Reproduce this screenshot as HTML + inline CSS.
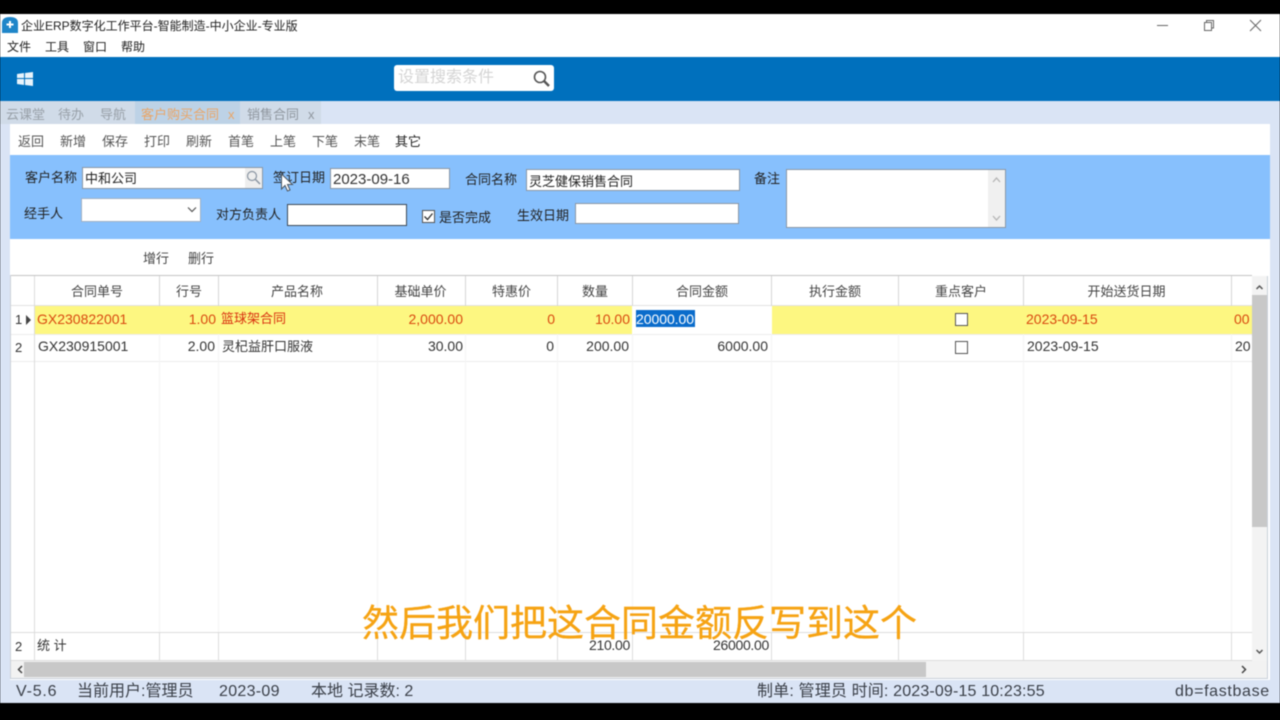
<!DOCTYPE html>
<html lang="zh"><head><meta charset="utf-8"><title>企业ERP</title>
<style>
html,body{margin:0;padding:0;background:#000;}
#p{position:relative;width:1280px;height:720px;overflow:hidden;background:#000;font-family:"Liberation Sans","Noto Sans CJK SC",sans-serif;font-size:13px;color:#333;filter:blur(.4px);}
#p div,#p svg{position:absolute;}
.t{white-space:nowrap;line-height:20px;height:20px;}
.n{font-size:14px;}
.hc{text-align:center;line-height:20px;height:20px;white-space:nowrap;color:#444;top:282px;}
.r{text-align:right;white-space:nowrap;line-height:20px;height:20px;font-size:14px;}
.red{color:#d9480f;}
.in{background:#fff;border:1px solid #8a97a6;box-sizing:border-box;}
.s{font-size:16px;color:#3a3f48;}
.v{width:1px;background:#e0e0e0;}
.vf{width:1px;background:#f4f4f4;}
.h{height:1px;background:#ececec;}
.cb{width:13px;height:13px;border:1px solid #555;background:#fff;box-sizing:border-box;}
</style></head><body><div id="p">
<div style="left:0;top:14px;width:1280px;height:689px;background:#dae4f5"></div>
<div style="left:0;top:14px;width:1280px;height:43px;background:#fff"></div>
<svg style="left:2px;top:17px" width="16" height="16" viewBox="0 0 16 16"><path d="M0 16V6Q0 0 8 0Q16 0 16 6V16Z" fill="#1f86c9"/><path d="M8 4V11M4.5 7.5H11.5" stroke="#fff" stroke-width="2"/></svg>
<div class="t" style="left:21px;top:16px;font-size:12px;color:#222">企业ERP数字化工作平台-智能制造-中小企业-专业版</div>
<div class="t" style="left:7px;top:37px;font-size:12px;color:#222">文件</div>
<div class="t" style="left:45px;top:37px;font-size:12px;color:#222">工具</div>
<div class="t" style="left:83px;top:37px;font-size:12px;color:#222">窗口</div>
<div class="t" style="left:121px;top:37px;font-size:12px;color:#222">帮助</div>
<svg style="left:1150px;top:16px" width="120" height="20" viewBox="0 0 120 20" fill="none" stroke="#666" stroke-width="1"><path d="M7 9.5H18"/><path d="M54.5 6.5H61.5V14.5H54.5ZM56.5 6V4.5H63.5V12H62"/><path d="M100 4L111 15M111 4L100 15"/></svg>
<div style="left:0;top:57px;width:1280px;height:44px;background:#0070bd"></div>
<svg style="left:17px;top:72px" width="16" height="14" viewBox="0 0 16 14" fill="#e8f3fb"><path d="M0 2L7 1V6H0ZM8 1L16 0V6H8ZM0 7H7V13L0 12ZM8 7H16V14L8 13Z"/></svg>
<div style="left:394px;top:65px;width:160px;height:26px;background:#fff;border-radius:3px"></div>
<div class="t" style="left:398px;top:68px;font-size:16px;color:#d4d4d4">设置搜索条件</div>
<svg style="left:531px;top:69px" width="20" height="19" viewBox="0 0 20 19" fill="none" stroke="#555"><circle cx="9" cy="8" r="5.5" stroke-width="1.6"/><path d="M13 12L18 17" stroke-width="2.4"/></svg>

<div style="left:0;top:101px;width:135px;height:23px;background:#d0dbe8"></div>
<div class="t" style="left:6px;top:105px;color:#98a0a8">云课堂</div>
<div class="t" style="left:58px;top:105px;color:#98a0a8">待办</div>
<div class="t" style="left:100px;top:105px;color:#98a0a8">导航</div>
<div style="left:135px;top:101px;width:105px;height:23px;background:#bdd2e6"></div>
<div class="t" style="left:141px;top:105px;color:#eaa566">客户购买合同</div>
<div class="t" style="left:228px;top:105px;color:#eaa566">x</div>
<div style="left:240px;top:101px;width:81px;height:23px;background:#d0dbe8"></div>
<div class="t" style="left:247px;top:105px;color:#8f969e">销售合同</div>
<div class="t" style="left:308px;top:105px;color:#8f969e">x</div>

<div style="left:10px;top:124px;width:1260px;height:31px;background:#fff"></div>
<div class="t" style="left:18px;top:132px;color:#555">返回</div>
<div class="t" style="left:60px;top:132px;color:#555">新增</div>
<div class="t" style="left:102px;top:132px;color:#555">保存</div>
<div class="t" style="left:144px;top:132px;color:#555">打印</div>
<div class="t" style="left:186px;top:132px;color:#555">刷新</div>
<div class="t" style="left:228px;top:132px;color:#555">首笔</div>
<div class="t" style="left:270px;top:132px;color:#555">上笔</div>
<div class="t" style="left:312px;top:132px;color:#555">下笔</div>
<div class="t" style="left:354px;top:132px;color:#555">末笔</div>
<div class="t" style="left:395px;top:132px;color:#222">其它</div>

<div style="left:10px;top:155px;width:1260px;height:84px;background:#87c0fd"></div>
<div class="t" style="left:25px;top:168px;color:#222">客户名称</div>
<div class="in" style="left:82px;top:167px;width:181px;height:22px"></div>
<div style="left:245px;top:168px;width:17px;height:20px;background:#eeeeee"></div>
<svg style="left:245px;top:169px" width="17" height="17" viewBox="0 0 17 17" fill="none" stroke="#8a95a2"><circle cx="7" cy="7" r="4.5" stroke-width="1.2"/><path d="M10.5 10.5L15 15" stroke-width="1.5"/></svg>
<div class="t" style="left:85px;top:169px;color:#222">中和公司</div>
<div class="t" style="left:273px;top:168px;color:#222">签订日期</div>
<div class="in" style="left:330px;top:168px;width:120px;height:21px"></div>
<div class="t" style="left:333px;top:170px;font-size:15px;color:#333">2023-09-16</div>
<div class="t" style="left:465px;top:170px;color:#222">合同名称</div>
<div class="in" style="left:526px;top:169px;width:214px;height:22px"></div>
<div class="t" style="left:529px;top:172px;color:#222">灵芝健保销售合同</div>
<div class="t" style="left:754px;top:169px;color:#222">备注</div>
<div class="in" style="left:786px;top:169px;width:220px;height:59px"></div>
<div style="left:988px;top:170px;width:17px;height:57px;background:#f0f0f0"></div>
<svg style="left:988px;top:170px" width="17" height="57" viewBox="0 0 17 57" fill="none" stroke="#b5b5b5" stroke-width="1.3"><path d="M5 12L8.5 8L12 12M5 46L8.5 50L12 46"/></svg>
<div class="t" style="left:24px;top:204px;color:#222">经手人</div>
<div class="in" style="left:81px;top:198px;width:120px;height:24px;border-color:#9fb0c4"></div>
<svg style="left:186px;top:206px" width="12" height="8" viewBox="0 0 12 8" fill="none" stroke="#555" stroke-width="1.2"><path d="M2 1.5L6 5.5L10 1.5"/></svg>
<div class="t" style="left:216px;top:205px;color:#222">对方负责人</div>
<div class="in" style="left:287px;top:204px;width:120px;height:22px;border-color:#3d4a58"></div>
<div class="cb" style="left:422px;top:210px"></div>
<svg style="left:422px;top:210px" width="13" height="13" viewBox="0 0 13 13" fill="none" stroke="#333" stroke-width="1.3"><path d="M2.5 6.5L5.5 9.5L10.5 3.5"/></svg>
<div class="t" style="left:439px;top:208px;color:#222">是否完成</div>
<div class="t" style="left:517px;top:206px;color:#222">生效日期</div>
<div class="in" style="left:575px;top:203px;width:164px;height:21px"></div>

<div style="left:10px;top:239px;width:1260px;height:441px;background:#fff"></div>
<div class="t" style="left:143px;top:249px;color:#444">增行</div>
<div class="t" style="left:188px;top:249px;color:#444">删行</div>

<div style="left:10px;top:275px;width:1242px;height:1px;background:#c4c4c4"></div>
<div style="left:10px;top:275px;width:1px;height:404px;background:#cdd2d8"></div>
<div style="left:11px;top:305px;width:1241px;height:1px;background:#e2e2e2"></div>

<div style="left:35px;top:306px;width:597px;height:28px;background:#fdf781"></div>
<div style="left:772px;top:306px;width:480px;height:28px;background:#fdf781"></div>

<div class="h" style="left:11px;top:334px;width:1241px"></div>
<div class="h" style="left:11px;top:361px;width:1241px"></div>
<div class="h" style="left:11px;top:632px;width:1241px;background:#dcdcdc"></div>
<div class="h" style="left:11px;top:660px;width:1241px;background:#dcdcdc"></div>

<div class="v" style="left:34px;top:276px;height:385px;background:#dcdcdc"></div>
<div class="v" style="left:159px;top:276px;height:30px;background:#d6d6d6"></div>
<div class="v" style="left:218px;top:276px;height:30px;background:#d6d6d6"></div>
<div class="v" style="left:377px;top:276px;height:30px;background:#d6d6d6"></div>
<div class="v" style="left:465px;top:276px;height:30px;background:#d6d6d6"></div>
<div class="v" style="left:557px;top:276px;height:30px;background:#d6d6d6"></div>
<div class="v" style="left:632px;top:276px;height:30px;background:#d6d6d6"></div>
<div class="v" style="left:771px;top:276px;height:30px;background:#d6d6d6"></div>
<div class="v" style="left:898px;top:276px;height:30px;background:#d6d6d6"></div>
<div class="v" style="left:1023px;top:276px;height:30px;background:#d6d6d6"></div>
<div class="v" style="left:1231px;top:276px;height:30px;background:#d6d6d6"></div>

<div class="vf" style="left:159px;top:334px;height:298px"></div>
<div class="vf" style="left:218px;top:334px;height:298px"></div>
<div class="vf" style="left:377px;top:334px;height:298px"></div>
<div class="vf" style="left:465px;top:334px;height:298px"></div>
<div class="vf" style="left:557px;top:334px;height:298px"></div>
<div class="vf" style="left:632px;top:334px;height:298px"></div>
<div class="vf" style="left:771px;top:334px;height:298px"></div>
<div class="vf" style="left:898px;top:334px;height:298px"></div>
<div class="vf" style="left:1023px;top:334px;height:298px"></div>
<div class="vf" style="left:1231px;top:334px;height:298px"></div>

<div class="v" style="left:159px;top:633px;height:28px;background:#dcdcdc"></div>
<div class="v" style="left:218px;top:633px;height:28px;background:#dcdcdc"></div>
<div class="v" style="left:377px;top:633px;height:28px;background:#dcdcdc"></div>
<div class="v" style="left:465px;top:633px;height:28px;background:#dcdcdc"></div>
<div class="v" style="left:557px;top:633px;height:28px;background:#dcdcdc"></div>
<div class="v" style="left:632px;top:633px;height:28px;background:#dcdcdc"></div>
<div class="v" style="left:771px;top:633px;height:28px;background:#dcdcdc"></div>
<div class="v" style="left:898px;top:633px;height:28px;background:#dcdcdc"></div>
<div class="v" style="left:1023px;top:633px;height:28px;background:#dcdcdc"></div>
<div class="v" style="left:1231px;top:633px;height:28px;background:#dcdcdc"></div>

<div class="hc" style="left:35px;width:124px">合同单号</div>
<div class="hc" style="left:160px;width:58px">行号</div>
<div class="hc" style="left:218px;width:158px">产品名称</div>
<div class="hc" style="left:377px;width:87px">基础单价</div>
<div class="hc" style="left:466px;width:91px">特惠价</div>
<div class="hc" style="left:558px;width:74px">数量</div>
<div class="hc" style="left:633px;width:138px">合同金额</div>
<div class="hc" style="left:772px;width:126px">执行金额</div>
<div class="hc" style="left:899px;width:124px">重点客户</div>
<div class="hc" style="left:1023px;width:207px">开始送货日期</div>

<div class="t" style="left:15px;top:310px;color:#333">1</div>
<svg style="left:25px;top:315px" width="7" height="10" viewBox="0 0 7 10" fill="#444"><path d="M1 0L6 5L1 10Z"/></svg>
<div class="t n red" style="left:37px;top:309px">GX230822001</div>
<div class="r red" style="left:160px;width:56px;top:309px">1.00</div>
<div class="t" style="left:221px;top:309px;color:#d9300f">篮球架合同</div>
<div class="r red" style="left:378px;width:85px;top:309px">2,000.00</div>
<div class="r red" style="left:466px;width:89px;top:309px">0</div>
<div class="r red" style="left:558px;width:72px;top:309px">10.00</div>
<div style="left:636px;top:310px;width:59px;height:17px;background:#0a6ccb"></div>
<div class="t n" style="left:636px;top:309px;color:#fff;letter-spacing:-.05px">20000.00</div>
<div class="cb" style="left:955px;top:313px"></div>
<div class="t n red" style="left:1026px;top:309px">2023-09-15</div>
<div class="t n red" style="left:1234px;top:309px">00</div>

<div class="t" style="left:15px;top:338px;color:#333">2</div>
<div class="t n" style="left:38px;top:336px">GX230915001</div>
<div class="r" style="left:160px;width:55px;top:336px">2.00</div>
<div class="t" style="left:222px;top:337px">灵杞益肝口服液</div>
<div class="r" style="left:378px;width:85px;top:336px">30.00</div>
<div class="r" style="left:466px;width:88px;top:336px">0</div>
<div class="r" style="left:558px;width:71px;top:336px">200.00</div>
<div class="r" style="left:633px;width:135px;top:336px">6000.00</div>
<div class="cb" style="left:955px;top:341px"></div>
<div class="t n" style="left:1027px;top:336px">2023-09-15</div>
<div class="t n" style="left:1235px;top:336px">20</div>

<div class="t" style="left:15px;top:637px;color:#333">2</div>
<div class="t" style="left:37px;top:636px">统 计</div>
<div class="r" style="left:558px;width:72px;top:635px;letter-spacing:-.3px">210.00</div>
<div class="r" style="left:633px;width:136px;top:635px;letter-spacing:-.3px">26000.00</div>

<div style="left:1252px;top:276px;width:15px;height:385px;background:#f3f3f3"></div>
<div style="left:1252px;top:295px;width:15px;height:232px;background:#c8c8c8"></div>
<svg style="left:1252px;top:280px" width="15" height="378" viewBox="0 0 15 378" fill="none" stroke="#555" stroke-width="1.5"><path d="M4.5 9L7.5 6L10.5 9M4.5 370L7.5 373L10.5 370"/></svg>
<div style="left:11px;top:661px;width:1256px;height:17px;background:#f2f2f2"></div>
<div style="left:24px;top:662px;width:902px;height:15px;background:#c8c8c8"></div>
<svg style="left:14px;top:664px" width="1234" height="11" viewBox="0 0 1234 11" fill="none" stroke="#444" stroke-width="1.5"><path d="M8 2L4.5 5.5L8 9M1228 2L1231.5 5.5L1228 9"/></svg>
<div style="left:1267px;top:276px;width:1px;height:403px;background:#c8d0da"></div>
<div style="left:10px;top:678px;width:1258px;height:1px;background:#c8d0da"></div>

<svg style="left:280px;top:173px" width="14" height="20" viewBox="0 0 14 20"><path d="M1.5 1V16L5 12.5L7.5 18L10 17L7.5 11.5H12.5Z" fill="#fff" stroke="#4a5560" stroke-width="1"/></svg>

<div class="t s" style="left:16px;top:682px;letter-spacing:.8px">V-5.6</div>
<div class="t s" style="left:77px;top:682px">当前用户:管理员</div>
<div class="t s" style="left:219px;top:682px;letter-spacing:.3px">2023-09</div>
<div class="t s" style="left:311px;top:682px">本地 记录数: 2</div>
<div class="t s" style="left:757px;top:682px;letter-spacing:.16px">制单: 管理员 时间: 2023-09-15 10:23:55</div>
<div class="t s" style="left:1175px;top:682px;letter-spacing:.65px">db=fastbase</div>

<div class="t" style="left:362px;top:602px;height:44px;line-height:44px;font-size:37px;color:#f6a313;-webkit-text-stroke:.3px #f6a313">然后我们把这合同金额反写到这个</div>
</div></body></html>
